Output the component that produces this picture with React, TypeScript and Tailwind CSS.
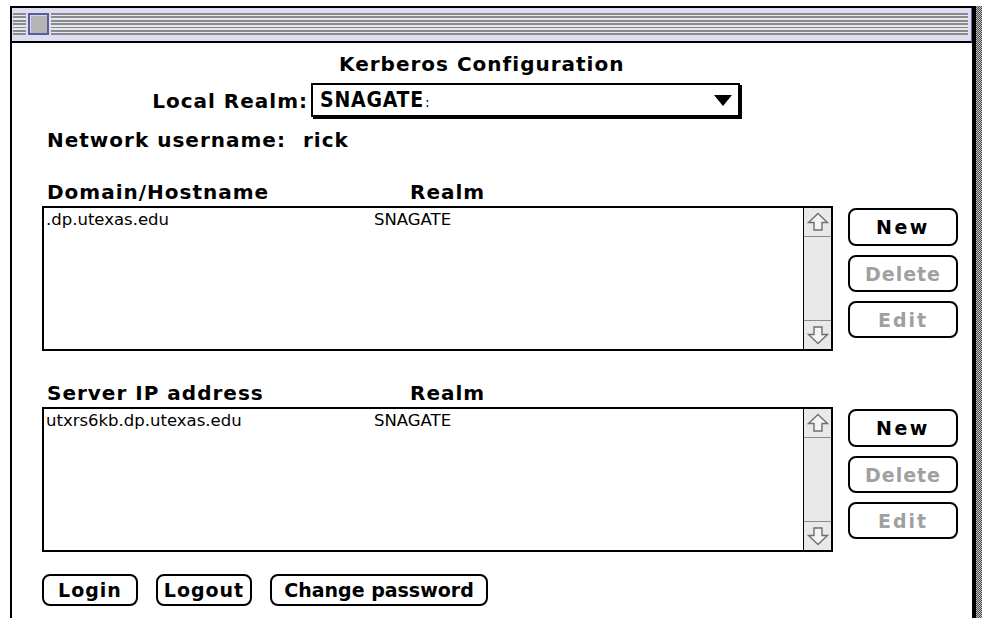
import React from "react";

const chicago =
  "font-['DejaVu_Sans',sans-serif] font-bold text-[20px] leading-[20px] tracking-[1px] text-black";
const geneva =
  "font-['DejaVu_Sans',sans-serif] text-[16.5px] leading-[20px] text-black";
const stripes =
  "bg-[repeating-linear-gradient(to_bottom,#8a8a8a_0px,#8a8a8a_1.7px,#e6e6ee_1.7px,#e6e6ee_3.4px)]";

function ScrollArrow({ down }: { down?: boolean }) {
  return (
    <svg width="22" height="20" viewBox="0 0 22 20" className={down ? "rotate-180" : ""}>
      <polygon
        points="11,1.5 20.5,10.5 15,10.5 15,18 7,18 7,10.5 1.5,10.5"
        fill="#f4f4f4"
        stroke="#6e6e6e"
        strokeWidth="1.4"
        strokeLinejoin="miter"
      />
    </svg>
  );
}

function MacButton({
  label,
  disabled,
  className,
  tracking = "tracking-[1px]",
}: {
  label: string;
  disabled?: boolean;
  className: string;
  tracking?: string;
}) {
  return (
    <div
      className={`flex items-center justify-center rounded-[8px] border-2 border-black bg-white ${className}`}
    >
      <span
        className={`font-['DejaVu_Sans',sans-serif] font-bold text-[19px] leading-[20px] ${tracking} ${
          disabled ? "text-[#a0a0a0]" : "text-black"
        }`}
      >
        {label}
      </span>
    </div>
  );
}

function ListPanel({ host, realm }: { host: string; realm: string }) {
  return (
    <div className="flex pl-[30px] mt-[4px]">
      <div className="flex w-[791px] h-[145px] border-2 border-black bg-white">
        <div className="flex-1 flex items-start pl-[2px] pt-[2px]">
          <span className={`${geneva} w-[328px]`}>{host}</span>
          <span className={geneva}>{realm}</span>
        </div>
        <div className="w-[28px] flex flex-col border-l-[1.5px] border-black bg-[#e9e9e9]">
          <div className="h-[29px] flex items-center justify-center border-b border-[#8a8a8a]">
            <ScrollArrow />
          </div>
          <div className="flex-1" />
          <div className="h-[29px] flex items-center justify-center border-t border-[#8a8a8a]">
            <ScrollArrow down />
          </div>
        </div>
      </div>
      <div className="ml-[15px] mt-[2px] flex flex-col gap-[9px]">
        <MacButton label="New" tracking="tracking-[2.5px]" className="w-[110px] h-[38px]" />
        <MacButton label="Delete" disabled className="w-[110px] h-[37px]" />
        <MacButton label="Edit" disabled tracking="tracking-[2px]" className="w-[110px] h-[37px]" />
      </div>
    </div>
  );
}

function Header({ left }: { left: string }) {
  return (
    <div className="flex pl-[35px] mt-[32px] h-[20px]">
      <span className={`${chicago} w-[363px]`}>{left}</span>
      <span className={chicago}>Realm</span>
    </div>
  );
}

export default function App() {
  return (
    <div className="w-[982px] h-[618px] overflow-hidden bg-white flex pt-[6px] pl-[10px]">
      {/* window frame */}
      <div className="w-[966px] h-[620px] flex flex-col border-l-2 border-t-2 border-r-4 border-black">
        {/* title bar */}
        <div className="h-[35px] flex border-b-2 border-black bg-[#dcdcf2] pl-[1px] pr-[3px] pt-[5px] pb-[6px] border-r border-r-[#6a6a9e]">
          <div className={`w-[13px] ${stripes}`} />
          <div className="w-[2px]" />
          <div className="w-[21px] border-2 border-[#5c5c9c] bg-[#b4b4b4] shadow-[inset_1px_1px_0_#d8d8e8]" />
          <div className="w-[2px]" />
          <div className={`flex-1 ${stripes}`} />
        </div>

        {/* dialog body */}
        <div className="flex-1 flex flex-col bg-white">
          <div className="pl-[327px] mt-[10px] h-[20px]">
            <span className={chicago}>Kerberos Configuration</span>
          </div>

          <div className="flex items-center mt-[10px] h-[36px]">
            <span className={`${chicago} w-[296px] text-right`}>Local Realm:</span>
            <div className="ml-[3px] w-[429px] h-[34px] self-start border-2 border-black shadow-[2px_2px_0_#000] flex items-center pl-[7px] pr-[6px]">
              <span className="font-['DejaVu_Sans_Condensed','DejaVu_Sans',sans-serif] font-bold text-[21px] leading-[20px] tracking-[0.8px] text-black">
                SNAGATE
              </span>
              <span className="font-['DejaVu_Sans',sans-serif] text-[14px] leading-[20px] text-black ml-[1px] mt-[4px]">
                :
              </span>
              <div className="flex-1" />
              <svg width="18" height="11" viewBox="0 0 18 11">
                <polygon points="0,0 18,0 9,11" fill="#000" />
              </svg>
            </div>
          </div>

          <div className="flex pl-[35px] mt-[11px] h-[20px]">
            <span className={`${chicago} w-[256px]`}>Network username:</span>
            <span className={chicago}>rick</span>
          </div>

          <Header left="Domain/Hostname" />
          <ListPanel host=".dp.utexas.edu" realm="SNAGATE" />

          <Header left="Server IP address" />
          <ListPanel host="utxrs6kb.dp.utexas.edu" realm="SNAGATE" />

          <div className="flex pl-[30px] mt-[22px] gap-[18px]">
            <MacButton label="Login" className="w-[96px] h-[32px]" />
            <MacButton label="Logout" className="w-[96px] h-[32px]" />
            <MacButton label="Change password" tracking="tracking-[0px]" className="w-[218px] h-[32px]" />
          </div>
        </div>
      </div>
      {/* neighbouring desktop pattern */}
      <div className="w-[6px] h-[620px] bg-[repeating-conic-gradient(#4a4a4a_0_25%,#c4c4c4_0_50%)] bg-[length:2px_2px]" />
    </div>
  );
}
